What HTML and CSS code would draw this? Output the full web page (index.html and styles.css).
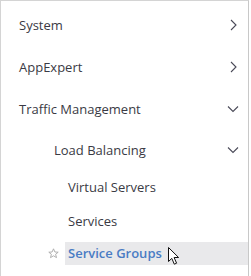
FILE: index.html
```html
<!DOCTYPE html>
<html>
<head>
<meta charset="utf-8">
<title>Navigation</title>
<link rel="stylesheet" href="styles.css">
</head>
<body>
<div class="Nav">
    <div class="Row Top"><span class="Label">System</span>
        <svg class="Chev" width="10" height="12" viewBox="0 0 10 12"><polyline points="2,1 7,6 2,11" /></svg>
    </div>
    <div class="Row Top"><span class="Label">AppExpert</span>
        <svg class="Chev" width="10" height="12" viewBox="0 0 10 12"><polyline points="2,1 7,6 2,11" /></svg>
    </div>
    <div class="Row Top"><span class="Label">Traffic Management</span>
        <svg class="Chev Down" width="12" height="8" viewBox="0 0 12 8"><polyline points="1,1.5 6,6.5 11,1.5" /></svg>
    </div>
    <div class="Row Top Lb"><span class="Label Sub">Load Balancing</span>
        <svg class="Chev Down" width="12" height="8" viewBox="0 0 12 8"><polyline points="1,1.5 6,6.5 11,1.5" /></svg>
    </div>
    <div class="Row Leaf First"><span class="Label Item">Virtual Servers</span></div>
    <div class="Row Leaf"><span class="Label Item">Services</span></div>
    <div class="Row Leaf Active">
        <svg class="Star" width="11" height="11" viewBox="0 0 11 11"><polygon points="5.5,0.8 6.9,4 10.2,4.2 7.6,6.3 8.5,9.6 5.5,7.8 2.5,9.6 3.4,6.3 0.8,4.2 4.1,4" /></svg>
        <span class="Hl">Service Groups</span>
        <svg class="Cursor" width="14" height="20" viewBox="0 0 14 20"><path d="M1.5,1.5 L1.5,15.5 L4.8,12.4 L7.3,18.2 L9.6,17.2 L7.1,11.5 L11.6,11.5 Z" /></svg>
    </div>
</div>
</body>
</html>
```

FILE: styles.css
```css
body{margin:0;font-family:"Open Sans","Noto Sans",sans-serif;font-size:13px;color:#3a3a44;background:#fff;}
.Nav{position:relative;width:249px;height:276px;border-top:1px solid #d4d4d4;border-left:1px solid #d4d4d4;border-right:1px solid #c8c8c8;padding-top:3px;box-sizing:border-box;}
.Row{display:flex;align-items:center;}
.Top{height:42px;padding-left:18px;padding-right:9px;}
.Lb{height:40px;}
.Label{flex:1;}
.Sub{padding-left:35px;}
.Chev{fill:none;stroke:#4a4a58;stroke-width:1.1;}
.Leaf{height:33px;padding-left:67px;}
.First{height:34px;}
.Active{position:relative;height:23px;margin-top:5px;padding-left:0;}
.Star{margin-left:47px;margin-right:6px;fill:none;stroke:#a8a8a8;stroke-width:0.9;}
.Hl{flex:1;height:23px;line-height:23px;padding-left:3px;background:#e9e9eb;color:#4a7cc4;font-weight:600;}
.Cursor{position:absolute;left:166px;top:4px;fill:#fff;stroke:#111;stroke-width:1;}
```
